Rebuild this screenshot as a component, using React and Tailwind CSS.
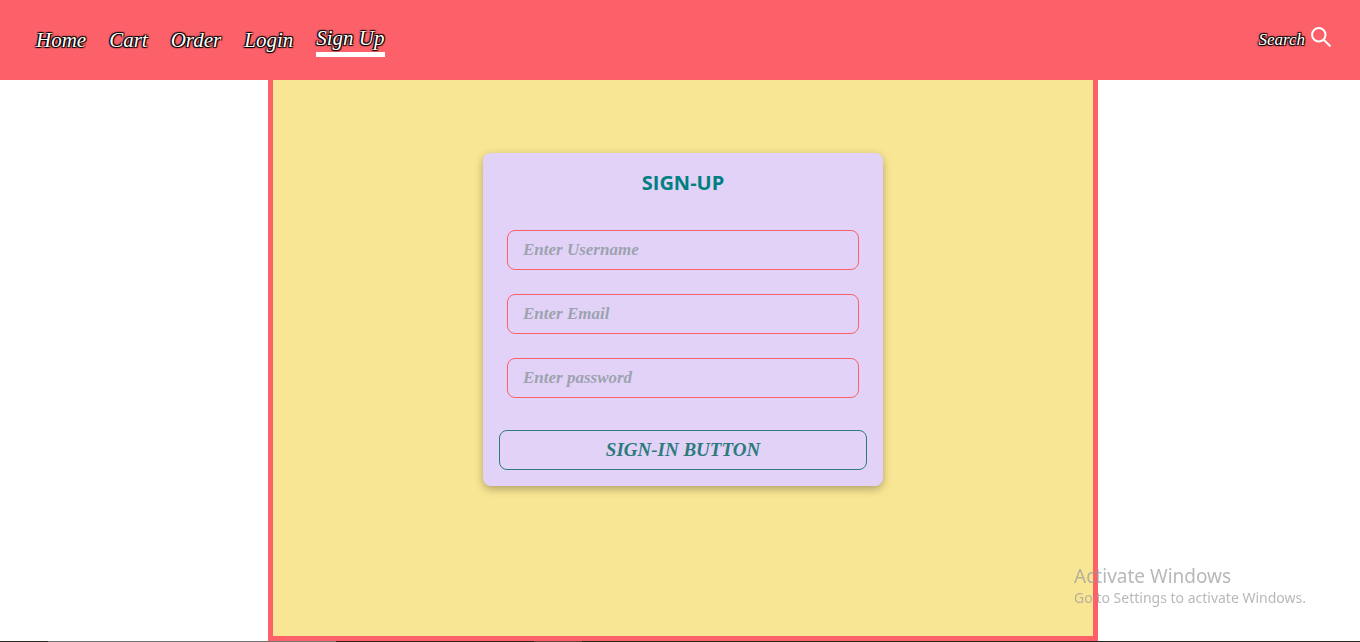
import React from "react";

const navItems = ["Home", "Cart", "Order", "Login"];

const fields = [
  { id: "username", type: "text", label: "Enter Username" },
  { id: "email", type: "email", label: "Enter Email" },
  { id: "password", type: "password", label: "Enter password" },
];

const script = "font-['Liberation_Serif',serif] italic";
const outlined =
  "text-white [text-shadow:1px_1px_1px_#000,-1px_-1px_1px_#000,1px_-1px_1px_#000,-1px_1px_1px_#000]";

function Header() {
  return (
    <header className="flex h-20 items-center justify-between bg-[#fc6068] pr-[29px] pl-9">
      <nav className={`flex items-center gap-[23px] text-[21px] leading-7 ${script} ${outlined}`}>
        {navItems.map((item) => (
          <a key={item} href="#">
            {item}
          </a>
        ))}
        <a href="#" aria-current="page" className="border-b-[5px] border-white">
          Sign Up
        </a>
      </nav>
      <button type="button" className="flex items-center gap-1.5">
        <span className={`text-[17px] leading-6 ${script} ${outlined}`}>Search</span>
        <svg
          viewBox="0 0 20 20"
          className="mb-1.5 size-5"
          fill="none"
          stroke="white"
          strokeWidth="2"
          strokeLinecap="round"
          aria-hidden="true"
        >
          <circle cx="7.8" cy="7.8" r="6.7" />
          <path d="M12.7 12.7 18.8 18.8" />
        </svg>
      </button>
    </header>
  );
}

function SignUpCard() {
  return (
    <form className="w-full max-w-[400px] self-start rounded-lg bg-[#e2d2f8] p-4 shadow-[0_3px_8px_rgba(0,0,0,0.3)]">
      <h1 className="text-center font-['Open_Sans',sans-serif] text-xl leading-7 font-bold text-[#008080]">
        SIGN-UP
      </h1>
      <div className="flex flex-col gap-6 px-2 pt-[33px] pb-8">
        {fields.map((field) => (
          <input
            key={field.id}
            id={field.id}
            type={field.type}
            aria-label={field.label}
            placeholder={field.label}
            className={`h-10 w-full rounded-lg border border-[#fc6068] bg-transparent px-[15px] text-[17px] font-bold placeholder:text-[#9ca3af] ${script}`}
          />
        ))}
      </div>
      <button
        type="submit"
        className={`h-10 w-full rounded-lg border border-[#2c7a7b] text-[19px] font-bold text-[#2c7a7b] ${script}`}
      >
        SIGN-IN BUTTON
      </button>
    </form>
  );
}

function ActivationNotice() {
  return (
    <aside className="pointer-events-none fixed right-[54px] bottom-[34px] font-['Noto_Sans',sans-serif] text-[#9a9a9a]/70">
      <p className="text-[19px] leading-6">Activate Windows</p>
      <p className="text-sm leading-5">Go to Settings to activate Windows.</p>
    </aside>
  );
}

function TaskbarEdge() {
  return (
    <div className="fixed inset-x-0 bottom-0 flex h-px bg-[#26261f]">
      <div className="w-12" />
      <div className="w-[288px] bg-[#767676]" />
      <div className="w-[198px] bg-[#3a1c1c]" />
      <div className="w-12 bg-[#6b3a3c]" />
    </div>
  );
}

export default function App() {
  return (
    <div className="flex min-h-screen flex-col bg-white pb-px">
      <Header />
      <main className="flex grow justify-center pl-[6px]">
        <section className="flex w-full max-w-[830px] justify-center border-x-[5px] border-b-[5px] border-[#fc6068] bg-[#f9e694] py-[73px]">
          <SignUpCard />
        </section>
      </main>
      <ActivationNotice />
      <TaskbarEdge />
    </div>
  );
}
